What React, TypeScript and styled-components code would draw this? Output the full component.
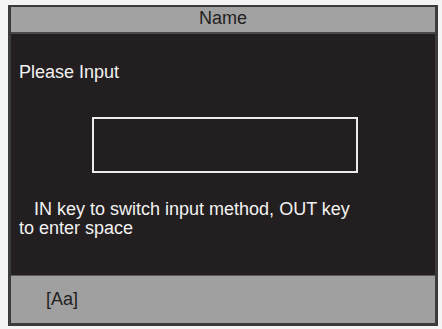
import * as React from 'react'
import styled, { createGlobalStyle } from 'styled-components'

// ___________________________________________________________________

const Global = createGlobalStyle`
  html, body {
    margin: 0;
    padding: 0;
    background: #f4f4f4;
  }
  body {
    font-family: "Liberation Sans", Arial, sans-serif;
  }
`

const Page = styled.div`
  padding: 5px 4px 2px 8px;
`

const Screen = styled.div`
  width: 424px;
  height: 316px;
  border: 3px solid #3b3b3b;
  border-top-width: 2px;
  display: flex;
  flex-direction: column;
  background: #231f20;
`

const Header = styled.div`
  height: 25px;
  background: #a3a2a3;
  border-bottom: 2px solid #4a4a4a;
  color: #231f20;
  font-size: 18px;
  line-height: 23px;
  text-align: center;
`

const Body = styled.div`
  flex: 1;
  display: flex;
  flex-direction: column;
  padding: 28px 0 0 8px;
  color: #f2f2f2;
  font-size: 18px;
`

const Prompt = styled.div`
  line-height: 20px;
`

const InputBox = styled.div`
  margin: 35px 0 0 73px;
  width: 262px;
  height: 52px;
  border: 2px solid #ececec;
`

const Hint = styled.div`
  margin-top: 27px;
  line-height: 19px;
  white-space: pre-wrap;
`

const Footer = styled.div`
  height: 47px;
  background: #a1a0a1;
  border-top: 1px solid #5a5a5a;
  color: #231f20;
  font-size: 18px;
  display: flex;
  align-items: center;
  padding-left: 35px;
`

// ___________________________________________________________________

const App = () => (
  <>
    <Global />
    <Page>
      <Screen>
        <Header>Name</Header>
        <Body>
          <Prompt>Please Input</Prompt>
          <InputBox />
          <Hint>{'   IN key to switch input method, OUT key\nto enter space'}</Hint>
        </Body>
        <Footer>[Aa]</Footer>
      </Screen>
    </Page>
  </>
)

export default App
